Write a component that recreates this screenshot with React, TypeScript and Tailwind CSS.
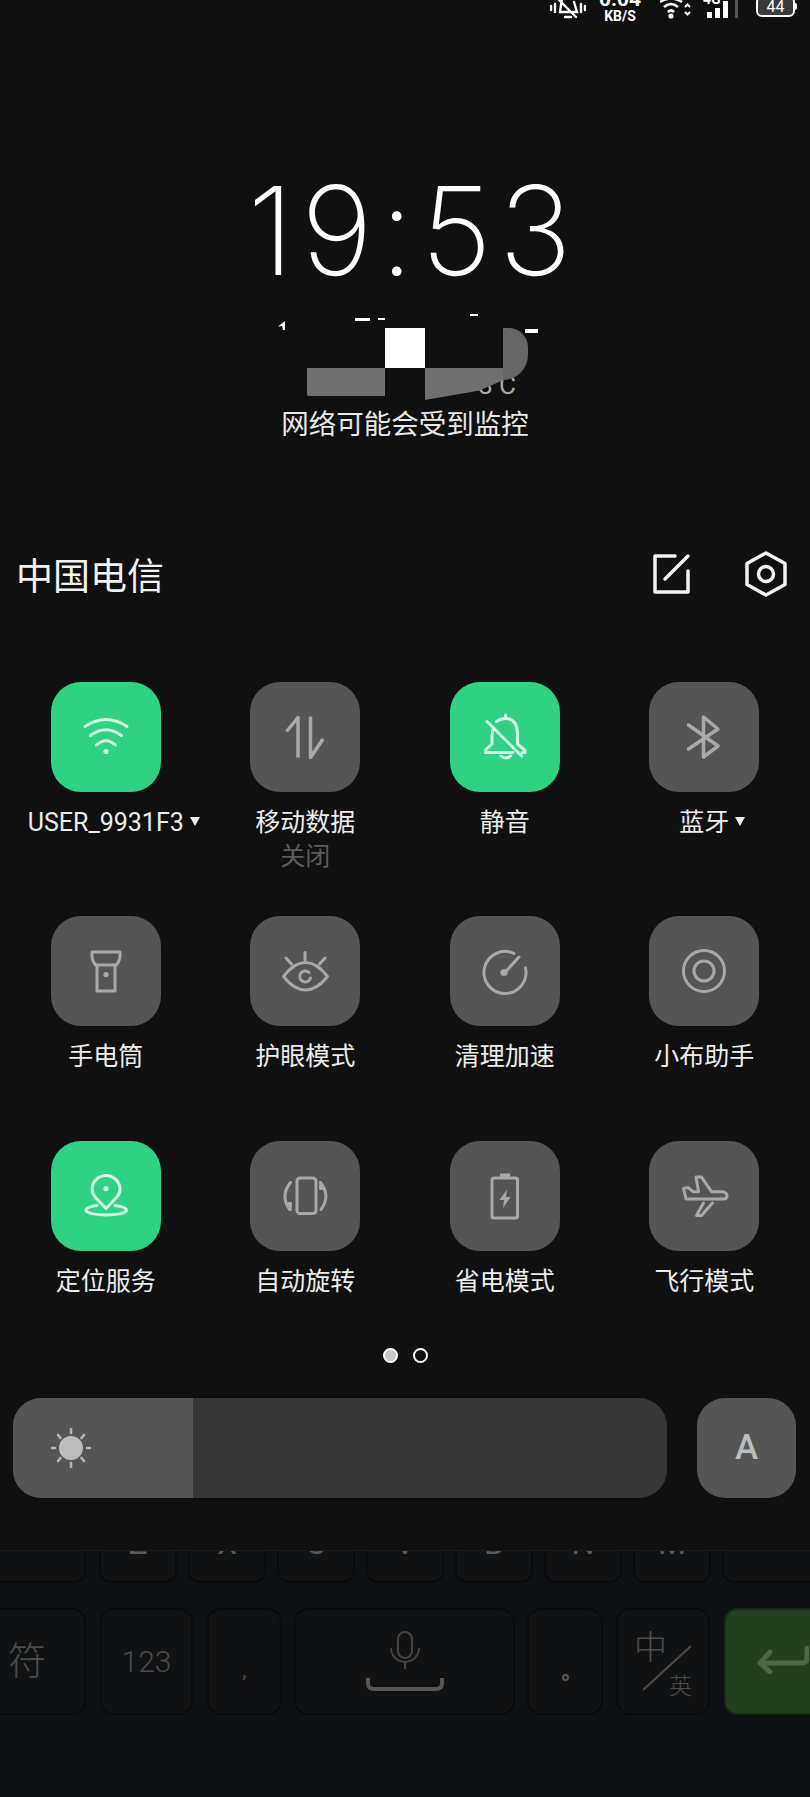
const ON = '#d6f8e6';
const OFF = '#a9a9a9';

function Icon({ color, children }: { color: string; children: React.ReactNode }) {
  return (
    <svg viewBox="0 0 110 110" className="size-[110px]" fill="none" stroke={color} strokeWidth={3} strokeLinecap="round" strokeLinejoin="round">
      {children}
    </svg>
  );
}

const tiles = [
  {
    label: 'USER_9931F3', active: true, caret: true,
    icon: (
      <>
        <path d="M34 44.5Q55 30.5 76 44.5" />
        <path d="M39.5 53.5Q55 42 70.5 53.5" />
        <path d="M45.5 63Q55 54.5 64.5 63" />
        <circle cx="55" cy="69.5" r="2.6" fill={ON} stroke="none" />
      </>
    ),
  },
  {
    label: '移动数据', sub: '关闭',
    icon: <path d="M36.5 49.5L48 35.5V75.5M60.5 34.5V75.5L73 57" strokeWidth={3.5} strokeLinecap="butt" />,
  },
  {
    label: '静音', active: true,
    icon: (
      <>
        <path d="M43.5 46Q42 49 42 54V62L35.5 68V70.5H63" />
        <path d="M46.5 39.5Q50.5 36.5 55.5 36.5Q67 36.5 67.5 52V62L75 68.5V70.5H72.5" />
        <path d="M37 39.5L71.5 74" />
        <path d="M55.5 36V33" />
        <path d="M51 74Q55.5 78 60.5 74" />
      </>
    ),
  },
  {
    label: '蓝牙', caret: true,
    icon: <path d="M39.5 43L69 64L54.5 75V35L69 47L39.5 67" strokeWidth={3.5} />,
  },
  {
    label: '手电筒',
    icon: (
      <>
        <path d="M41 36H69V40Q69 44 65.5 49H44.5Q41 44 41 40Z" />
        <path d="M46 49V75H64V49" />
        <circle cx="55" cy="58.5" r="2.6" fill={OFF} stroke="none" />
      </>
    ),
  },
  {
    label: '护眼模式',
    icon: (
      <>
        <path d="M33.5 60.5Q44 46.5 55.5 46.5Q67 46.5 77.5 60.5Q67 74 55.5 74Q44 74 33.5 60.5Z" />
        <path d="M59 56.5A5.5 5.5 0 1 0 60.5 62" />
        <path d="M55 36.5V44M36 42L41.5 48M75 42L69.5 48" />
      </>
    ),
  },
  {
    label: '清理加速',
    icon: (
      <>
        <path d="M64 37.5A21 21 0 1 0 75.5 52" />
        <path d="M54 57.5L69 41" />
        <circle cx="54" cy="56.5" r="3.6" fill={OFF} stroke="none" />
      </>
    ),
  },
  {
    label: '小布助手',
    icon: (
      <>
        <circle cx="55" cy="55" r="20.5" />
        <circle cx="55" cy="55" r="10" />
      </>
    ),
  },
  {
    label: '定位服务', active: true,
    icon: (
      <>
        <path d="M55 67.5L44.5 56.5Q41 52.5 41 48.5A14 14 0 0 1 69 48.5Q69 52.5 65.5 56.5Z" />
        <circle cx="55" cy="47.5" r="2.6" fill={ON} stroke="none" />
        <path d="M46 64.5C39 65.5 35 67 35 69C35 72 44 74 55 74C66 74 75.5 72 75.5 69C75.5 67 71 65.5 64 64.5" />
      </>
    ),
  },
  {
    label: '自动旋转',
    icon: (
      <>
        <rect x="47" y="37" width="19" height="35.5" rx="3" />
        <path d="M40.5 41.5Q30 55 39.5 68.5" />
        <path d="M70.5 41.5Q81 55 71 68.5" />
        <path d="M36 62L41 70L41.5 62Z" fill={OFF} strokeWidth={1} />
        <path d="M75 48L70 40L69.5 48Z" fill={OFF} strokeWidth={1} />
      </>
    ),
  },
  {
    label: '省电模式',
    icon: (
      <>
        <rect x="42" y="37" width="25.5" height="40" rx="2" />
        <rect x="50" y="32.5" width="10" height="4" fill={OFF} stroke="none" />
        <path d="M57 48.5L49.5 59H54L53 67L60.5 56H56Z" fill={OFF} stroke="none" />
      </>
    ),
  },
  {
    label: '飞行模式',
    icon: (
      <>
        <path d="M34.5 47.5L39 46.5L44 50.7H49.5L47 36H52.5L62.5 50.7H73Q78 51 78 55Q78 58 74 58H37Z" />
        <path d="M54.5 62L47.5 74.5H52.5L63.5 62" />
      </>
    ),
  },
];

function Tile({ t }: { t: (typeof tiles)[number] }) {
  return (
    <div className="flex flex-col items-center">
      <div className={`flex size-[110px] items-center justify-center rounded-[30px] ${t.active ? 'bg-[#2ed282]' : 'bg-[#555555]'}`}>
        <Icon color={t.active ? ON : OFF}>{t.icon}</Icon>
      </div>
      <div className="relative mt-[14px] text-[25px] leading-[34px] whitespace-nowrap text-[#ececec]">
        {t.label}
        {t.caret && (
          <svg viewBox="0 0 10 9" className="absolute top-[11px] left-full ml-[6px] w-[10px] h-[9px]">
            <path d="M0 0H10L5 9Z" fill="#ececec" />
          </svg>
        )}
      </div>
      {t.sub && <div className="text-[25px] leading-[34px] text-[#5c5c5c]">{t.sub}</div>}
    </div>
  );
}

const row1Keys = ['X', 'C', 'V', 'B', 'N', 'M'];

export default function App() {
  return (
    <div className="flex h-[1797px] w-[810px] flex-col overflow-hidden bg-[#101010] text-white [font-family:Roboto,'Noto_Sans_CJK_SC',sans-serif]">
      {/* status bar, cut off at the top of the shot */}
      <div className="flex h-[22px] shrink-0 justify-end overflow-hidden pr-[15px]">
        <svg viewBox="0 0 36 20" className="mr-[16px] h-[20px] w-[36px]" fill="none" stroke="white" strokeWidth={2.4} strokeLinecap="round">
          <path d="M1 6V10M5 4V12M31 4V12M35 6V10" />
          <path d="M12 -2L10 12H27L24 2M9 0L26 17" />
          <path d="M15 17H21" />
        </svg>
        <div className="mr-[22px] flex w-[36px] flex-col items-center font-bold">
          <div className="-mt-[11px] text-[21px] leading-[21px] whitespace-nowrap">0.04</div>
          <div className="text-[14px] leading-[12px] whitespace-nowrap">KB/S</div>
        </div>
        <svg viewBox="0 0 32 20" className="mr-[11px] h-[20px] w-[32px]" fill="none" stroke="white" strokeWidth={2.6}>
          <path d="M0 2Q11 -5 22 2" />
          <path d="M4 7Q11 1 18 7" />
          <path d="M8 12Q11 9 14 12" />
          <circle cx="11" cy="16" r="2.6" fill="white" stroke="none" />
          <path d="M25 7L27.5 4.5L30 7M25 12L27.5 14.5L30 12" strokeWidth={2} />
        </svg>
        <div className="relative mr-[4px] w-[28px]">
          <div className="absolute -top-[9px] left-0 text-[14px] leading-[16px] font-bold">4G</div>
          <div className="absolute bottom-[4px] left-[4px] flex items-end gap-[3px]">
            <div className="h-[6px] w-[5px] bg-white" />
            <div className="h-[10px] w-[5px] bg-white" />
            <div className="h-[17px] w-[5px] bg-white" />
          </div>
        </div>
        <div className="mr-[18px] h-[18px] w-[3px] bg-[#555555]" />
        <div className="relative -mt-[4px] flex h-[21px] w-[39px] items-center justify-center rounded-[6px] border-2 border-white bg-[#3a3a3a] text-[16px] leading-none">
          44
          <div className="absolute top-[5px] -right-[4px] h-[7px] w-[2px] rounded-r bg-white" />
        </div>
      </div>

      {/* clock */}
      <div className="relative h-[518px] shrink-0">
        <div className="mt-[143px] pl-[16px] text-center [font-family:Inter,sans-serif] text-[123px] leading-[131px] font-[250] tracking-[7px] text-white">
          19:53
        </div>
        {/* mosaic over the date and weather line */}
        <div className="absolute top-[350px] left-[478px] text-[26px] leading-[26px] text-[#a8a8a8]">8 C</div>
        <div className="absolute top-[299px] left-[278px] h-[9px] w-[7px] bg-white [clip-path:polygon(100%_0,0_60%,60%_55%,70%_100%,100%_100%)]" />
        <div className="absolute top-[296px] left-[355px] h-[3px] w-[15px] bg-white" />
        <div className="absolute top-[296px] left-[378px] h-[2px] w-[7px] bg-white" />
        <div className="absolute top-[292px] left-[470px] h-[2px] w-[8px] bg-white" />
        <div className="absolute top-[307px] left-[525px] h-[4px] w-[13px] bg-white" />
        <div className="absolute top-[306px] left-[385px] h-[40px] w-[40px] bg-white" />
        <div className="absolute top-[346px] left-[307px] h-[28px] w-[78px] rounded-bl-[2px] bg-[#707070]" />
        <div className="absolute top-[346px] left-[425px] h-[32px] w-[78px] bg-[#6f6f6f] [clip-path:polygon(0_0,100%_0,100%_38%,70%_70%,0_100%)]" />
        <div className="absolute top-[306px] left-[503px] h-[52px] w-[25px] rounded-tr-[20px] rounded-br-[26px] bg-[#666666]" />
        <div className="absolute top-[384px] left-0 w-full text-center text-[27.5px] leading-[38px] text-[#e8e8e8]">
          网络可能会受到监控
        </div>
      </div>

      {/* carrier header */}
      <div className="flex h-[142px] shrink-0 items-start justify-between pt-[12px] pr-[22px] pl-[16px]">
        <div className="mt-[1px] text-[37px] leading-[50px] text-[#f2f2f2]">中国电信</div>
        <div className="flex gap-[53px]">
          <svg viewBox="0 0 40 44" className="h-[44px] w-[40px]" fill="none" stroke="#f2f2f2" strokeWidth={3.5} strokeLinecap="round" strokeLinejoin="round">
            <path d="M24 4H4V40H37V19" />
            <path d="M37 4L14 27" />
          </svg>
          <svg viewBox="0 0 44 48" className="-mt-[2px] h-[48px] w-[44px]" fill="none" stroke="#f2f2f2" strokeWidth={3.5} strokeLinejoin="round">
            <path d="M22 3L41 13.5V34.5L22 45L3 34.5V13.5Z" />
            <circle cx="22" cy="24" r="7.5" />
          </svg>
        </div>
      </div>

      {/* tile grid */}
      <div className="mx-[6px] grid w-[798px] shrink-0 grid-cols-4">
        {tiles.map((t, i) => (
          <div key={t.label} className={i < 4 ? 'h-[234px]' : i < 8 ? 'h-[225px]' : 'h-[207px]'}>
            <Tile t={t} />
          </div>
        ))}
      </div>

      {/* pager */}
      <div className="flex shrink-0 justify-center gap-[15px]">
        <div className="size-[15px] rounded-full border-2 border-white bg-[#c8c8c8]" />
        <div className="size-[15px] rounded-full border-2 border-white" />
      </div>

      {/* brightness */}
      <div className="mt-[35px] flex h-[100px] shrink-0 pl-[13px]">
        <div className="flex w-[654px] overflow-hidden rounded-[28px] bg-[#373737]">
          <div className="flex w-[180px] items-center bg-[#555555] pl-[34px]">
            <svg viewBox="0 0 48 48" className="size-[48px]" fill="none" stroke="#b4b4b4" strokeWidth={2.6} strokeLinecap="round">
              <circle cx="24" cy="24" r="12" fill="#bdbdbd" stroke="none" />
              <path d="M24 5V9M24 39V43M5 24H8M40 24H43M11 11L13.5 14M37 11L34.5 14M11 37L13.5 34M37 37L34.5 34" />
            </svg>
          </div>
        </div>
        <div className="ml-[30px] flex w-[99px] items-center justify-center rounded-[28px] bg-[#555555] text-[35px] font-medium text-[#bbbbbb]">
          A
        </div>
      </div>

      {/* dimmed keyboard below the panel */}
      <div className="mt-[52px] flex-1 overflow-hidden border-t border-t-[#1a1a1a] bg-[#0e1113]">
        <div className="flex h-[32px]">
          <div className="-ml-[14px] h-full w-[100px] shrink-0 rounded-b-[12px] border-2 border-t-0 border-[#0a0a0b] bg-[#101214]" />
          <div className="ml-[13px] flex shrink-0 gap-[11px]">
            {['Z', ...row1Keys].map((k) => (
              <div key={k} className="flex h-[32px] w-[78px] shrink-0 justify-center overflow-hidden rounded-b-[12px] border-2 border-t-0 border-[#0a0a0b] bg-[#101214] text-[32px] leading-[32px] text-[#5a5a5a]">
                <span className="-mt-[24px]">{k}</span>
              </div>
            ))}
            <div className="h-full w-[100px] shrink-0 rounded-b-[12px] border-2 border-t-0 border-[#0a0a0b] bg-[#101214]" />
          </div>
        </div>
        <div className="mt-[25px] flex h-[107px] text-[#4c4c4c]">
          <div className="-ml-[14px] flex w-[100px] shrink-0 items-center rounded-[14px] border-2 border-[#0a0a0b] bg-[#101214] pl-[20px] text-[38px] font-light">符</div>
          <div className="ml-[14px] flex w-[93px] shrink-0 items-center justify-center rounded-[14px] border-2 border-[#0a0a0b] bg-[#101214] text-[30px] font-light">123</div>
          <div className="ml-[14px] flex w-[75px] shrink-0 items-end justify-center rounded-[14px] border-2 border-[#0a0a0b] bg-[#101214] pb-[32px] text-[22px] leading-none">,</div>
          <div className="ml-[12px] flex w-[221px] shrink-0 flex-col items-center rounded-[14px] border-2 border-[#0a0a0b] bg-[#101214] pt-[21px]">
            <svg viewBox="0 0 30 38" className="h-[38px] w-[30px]" fill="none" stroke="#444444" strokeWidth={2}>
              <rect x="8" y="1" width="14" height="26" rx="7" />
              <path d="M1 17A14 14 0 0 0 29 17M15 31V38" />
            </svg>
            <svg viewBox="0 0 78 13" className="mt-[9px] h-[13px] w-[78px]" fill="none" stroke="#555555" strokeWidth={4}>
              <path d="M2 0V5Q2 11 8 11H70Q76 11 76 5V0" />
            </svg>
          </div>
          <div className="ml-[12px] flex w-[76px] shrink-0 items-end justify-center rounded-[14px] border-2 border-[#0a0a0b] bg-[#101214] pb-[32px]">
            <div className="size-[7px] rounded-full border-2 border-[#555555]" />
          </div>
          <div className="relative ml-[13px] w-[94px] shrink-0 rounded-[14px] border-2 border-[#0a0a0b] bg-[#101214]">
            <div className="absolute top-[18px] left-[16px] text-[33px] leading-[40px] font-light">中</div>
            <svg viewBox="0 0 50 46" className="absolute top-[35px] left-[24px] h-[46px] w-[50px]" fill="none" stroke="#4c4c4c" strokeWidth={2}>
              <path d="M49 1L1 45" />
            </svg>
            <div className="absolute top-[62px] left-[51px] text-[23px] leading-[30px] font-light">英</div>
          </div>
          <div className="ml-[14px] flex w-[100px] shrink-0 items-center rounded-[14px] border-2 border-[#182c15] bg-[#25401f] pl-[31px]">
            <svg viewBox="0 0 52 28" className="mb-[3px] h-[28px] w-[52px] shrink-0" fill="none" stroke="#4f664a" strokeWidth={5} strokeLinejoin="round" strokeLinecap="round">
              <path d="M50 2V12Q50 17 45 17H4M13 6L3 17L13 26" />
            </svg>
          </div>
        </div>
      </div>
    </div>
  );
}
